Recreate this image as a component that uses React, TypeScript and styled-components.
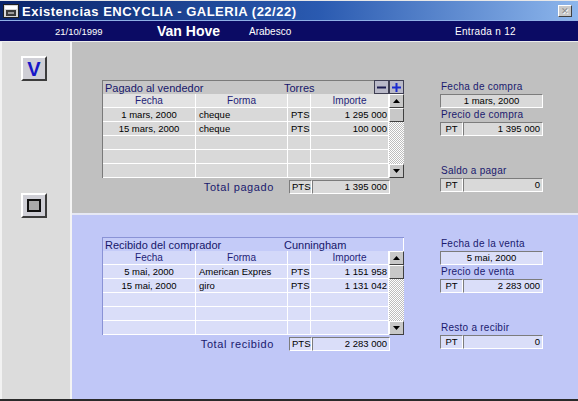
import React from 'react';
import styled, { createGlobalStyle, ThemeProvider } from 'styled-components';

type Palette = {
  panel: string;
  row: string;
  head: string;
  title: string;
  frame: string;
};

const greyTone: Palette = {
  panel: '#c0c0c0',
  row: '#d9d9d9',
  head: '#e3e3e3',
  title: '#c6c6c6',
  frame: '#7a7a7a',
};

const blueTone: Palette = {
  panel: '#c0c7f7',
  row: '#dadef9',
  head: '#d3d8f9',
  title: '#c4cbf8',
  frame: '#8a93d6',
};

type Row = [string, string, string, string];

const pagos: Row[] = [
  ['1 mars, 2000', 'cheque', 'PTS', '1 295 000'],
  ['15 mars, 2000', 'cheque', 'PTS', '100 000'],
];

const cobros: Row[] = [
  ['5 mai, 2000', 'American Expres', 'PTS', '1 151 958'],
  ['15 mai, 2000', 'giro', 'PTS', '1 131 042'],
];

const GlobalStyle = createGlobalStyle`
  html, body {
    margin: 0;
    padding: 0;
    background: #c0c0c0;
  }
  body {
    font-family: "Liberation Sans", Arial, sans-serif;
  }
`;

const Window = styled.div`
  width: 578px;
  height: 401px;
  box-sizing: border-box;
  display: flex;
  flex-direction: column;
  border-top: 1px solid #e8e8e8;
  border-bottom: 2px solid #2a2a2a;
  background: #c0c0c0;
  overflow: hidden;
`;

const TitleBar = styled.div`
  height: 19px;
  display: flex;
  align-items: center;
  gap: 3px;
  padding: 1px 6px 0 3px;
  box-sizing: border-box;
  background: linear-gradient(90deg, #0a246a 0%, #2a5ab0 55%, #8db6ec 100%);
`;

const TitleText = styled.span`
  flex: 1;
  color: #ffffff;
  font-weight: bold;
  font-size: 13px;
  letter-spacing: 0.5px;
  white-space: nowrap;
`;

const CloseButton = styled.span`
  width: 14px;
  height: 12px;
  box-sizing: border-box;
  display: flex;
  align-items: center;
  justify-content: center;
  background: #c8c8c8;
  border: 1px solid;
  border-color: #ffffff #404040 #404040 #ffffff;
  color: #8a8a8a;
  font-size: 9px;
  line-height: 1;
  text-shadow: 1px 1px 0 #ffffff;
`;

const Header = styled.div`
  height: 21px;
  box-sizing: border-box;
  display: grid;
  grid-template-columns: 102px 92px 206px 1fr;
  align-items: center;
  padding-left: 55px;
  border-top: 1px solid #8fb0e6;
  background: #0b0b64;
  color: #ffffff;
`;

const HeaderText = styled.span<{ $size: number; $bold?: boolean; $spacing?: number }>`
  font-size: ${(p) => p.$size}px;
  font-weight: ${(p) => (p.$bold ? 'bold' : 'normal')};
  letter-spacing: ${(p) => p.$spacing ?? 0}px;
  white-space: nowrap;
`;

const Body = styled.div`
  flex: 1;
  display: flex;
  border-top: 1px solid #ececec;
`;

const Sidebar = styled.div`
  width: 72px;
  box-sizing: border-box;
  display: flex;
  flex-direction: column;
  gap: 112px;
  padding: 14px 0 0 21px;
  background: #dcdcdc;
  box-shadow: inset 2px 0 0 #f2f2f2, inset -2px 0 0 #f4f4f4;
`;

const SideButton = styled.button`
  width: 26px;
  height: 25px;
  padding: 0;
  display: flex;
  align-items: center;
  justify-content: center;
  background: #cfcfd6;
  border: 2px solid;
  border-color: #ffffff #3c3c3c #3c3c3c #ffffff;
  font-family: "Liberation Sans", Arial, sans-serif;
`;

const VGlyph = styled.span`
  color: #1616c8;
  font-size: 20px;
  font-weight: bold;
  line-height: 1;
`;

const StopGlyph = styled.span`
  width: 14px;
  height: 13px;
  box-sizing: border-box;
  border: 2px solid #111111;
  background: #a9a9a9;
`;

const Main = styled.div`
  flex: 1;
  display: flex;
  flex-direction: column;
`;

const Section = styled.section<{ $top: number; $fill?: boolean }>`
  box-sizing: border-box;
  display: flex;
  align-items: flex-start;
  gap: 36px;
  padding: ${(p) => p.$top}px 0 0 30px;
  height: ${(p) => (p.$fill ? 'auto' : '173px')};
  flex: ${(p) => (p.$fill ? 1 : 'none')};
  background: ${(p) => p.theme.panel};
  border-bottom: ${(p) => (p.$fill ? 'none' : '2px solid #e6e8f4')};
`;

const TableBlock = styled.div`
  width: 302px;
  display: flex;
  flex-direction: column;
`;

const Frame = styled.div`
  box-sizing: border-box;
  border-top: 1px solid ${(p) => p.theme.frame};
  border-left: 1px solid ${(p) => p.theme.frame};
`;

const TitleRow = styled.div<{ $boxed?: boolean }>`
  height: 13px;
  display: grid;
  grid-template-columns: 179px 1fr auto;
  align-items: center;
  padding-left: 2px;
  background: ${(p) => p.theme.title};
  border-right: ${(p) => (p.$boxed ? '1px solid #ffffff' : 'none')};
  color: #16166a;
  font-size: 11px;
  white-space: nowrap;
`;

const PlusMinus = styled.div`
  display: flex;
  align-self: start;
  margin-top: -1px;
`;

const SmallButton = styled.span`
  width: 15px;
  height: 14px;
  box-sizing: border-box;
  display: flex;
  align-items: center;
  justify-content: center;
  background: #b9b9c8;
  border: 1px solid #3e3e52;
`;

const TableBody = styled.div`
  display: flex;
`;

const Grid = styled.div`
  display: grid;
  grid-template-columns: 93px 92px 23px 78px;
  grid-auto-rows: 14px;
`;

const HeadCell = styled.div`
  box-sizing: border-box;
  background: ${(p) => p.theme.head};
  border-right: 1px solid #ffffff;
  border-bottom: 1px solid #ffffff;
  color: #1e1e78;
  font-size: 10px;
  line-height: 13px;
  text-align: center;
`;

const Cell = styled.div<{ $align: 'left' | 'center' | 'right' }>`
  box-sizing: border-box;
  padding: 0 ${(p) => (p.$align === 'right' ? 1 : 3)}px 0 3px;
  background: ${(p) => p.theme.row};
  border-right: 1px solid #ffffff;
  border-bottom: 1px solid #ffffff;
  color: #000000;
  font-size: 9.5px;
  line-height: 13px;
  text-align: ${(p) => p.$align};
  white-space: nowrap;
  overflow: hidden;
`;

const Scroll = styled.div`
  width: 15px;
  display: flex;
  flex-direction: column;
`;

const ScrollButton = styled.span`
  height: 14px;
  box-sizing: border-box;
  display: flex;
  align-items: center;
  justify-content: center;
  background: #c8c8c8;
  border: 1px solid;
  border-color: #ffffff #404040 #404040 #ffffff;
`;

const Track = styled.span`
  flex: 1;
  background: repeating-conic-gradient(#bdbdbd 0 25%, #ffffff 0 50%) 0 0 / 2px 2px;
`;

const TotalRow = styled.div`
  display: grid;
  grid-template-columns: 187px 23px 78px;
  height: 14px;
  margin-top: 2px;
`;

const TotalLabel = styled.span`
  padding-right: 15px;
  color: #1a1a6e;
  font-size: 11px;
  letter-spacing: 0.6px;
  line-height: 14px;
  text-align: right;
  white-space: nowrap;
`;

const Box = styled.span<{ $align: 'left' | 'center' | 'right' }>`
  box-sizing: border-box;
  height: 14px;
  padding: 0 2px;
  background: ${(p) => p.theme.row};
  border: 1px solid;
  border-color: #7c7c7c #ffffff #ffffff #7c7c7c;
  color: #000000;
  font-size: 9.5px;
  line-height: 12px;
  text-align: ${(p) => p.$align};
  white-space: nowrap;
`;

const FieldColumn = styled.div`
  width: 103px;
  display: flex;
  flex-direction: column;
`;

const FieldLabel = styled.span<{ $gap?: number }>`
  height: 14px;
  margin-top: ${(p) => p.$gap ?? 0}px;
  padding-left: 1px;
  color: #1a1a6e;
  font-size: 10px;
  letter-spacing: 0.25px;
  line-height: 13px;
  white-space: nowrap;
`;

const MoneyField = styled.div`
  display: grid;
  grid-template-columns: 23px 1fr;
`;

const TitleIcon = () => (
  <svg width="16" height="14" viewBox="0 0 16 14">
    <rect x="0.5" y="0.5" width="15" height="13" fill="#d8d8d8" stroke="#202020" />
    <rect x="2" y="2" width="12" height="3" fill="#ffffff" />
    <rect x="3" y="6" width="10" height="6" fill="#3a3a3a" />
    <rect x="5" y="8" width="6" height="2" fill="#9a9a9a" />
  </svg>
);

const Arrow = ({ up }: { up?: boolean }) => (
  <svg width="7" height="4" viewBox="0 0 7 4">
    <polygon points={up ? '3.5,0 7,4 0,4' : '0,0 7,0 3.5,4'} fill="#000000" />
  </svg>
);

const MinusIcon = () => (
  <svg width="11" height="11" viewBox="0 0 11 11">
    <rect x="1" y="4.5" width="9" height="2" fill="#1c1c50" />
  </svg>
);

const PlusIcon = () => (
  <svg width="11" height="11" viewBox="0 0 11 11">
    <rect x="1" y="4.5" width="9" height="2" fill="#1a2ad0" />
    <rect x="4.5" y="1" width="2" height="9" fill="#1a2ad0" />
  </svg>
);

interface LedgerProps {
  title: string;
  party: string;
  rows: Row[];
  totalLabel: string;
  total: string;
  editable?: boolean;
}

const Ledger = ({ title, party, rows, totalLabel, total, editable }: LedgerProps) => {
  const filled = [...rows];
  while (filled.length < 5) filled.push(['', '', '', '']);
  return (
    <TableBlock>
      <Frame>
        <TitleRow $boxed={!editable}>
          <span>{title}</span>
          <span>{party}</span>
          {editable ? (
            <PlusMinus>
              <SmallButton>
                <MinusIcon />
              </SmallButton>
              <SmallButton>
                <PlusIcon />
              </SmallButton>
            </PlusMinus>
          ) : (
            <span />
          )}
        </TitleRow>
        <TableBody>
          <Grid>
            <HeadCell>Fecha</HeadCell>
            <HeadCell>Forma</HeadCell>
            <HeadCell />
            <HeadCell>Importe</HeadCell>
            {filled.map((r, i) => (
              <React.Fragment key={i}>
                <Cell $align="center">{r[0]}</Cell>
                <Cell $align="left">{r[1]}</Cell>
                <Cell $align="center">{r[2]}</Cell>
                <Cell $align="right">{r[3]}</Cell>
              </React.Fragment>
            ))}
          </Grid>
          <Scroll>
            <ScrollButton>
              <Arrow up />
            </ScrollButton>
            <ScrollButton />
            <Track />
            <ScrollButton>
              <Arrow />
            </ScrollButton>
          </Scroll>
        </TableBody>
      </Frame>
      <TotalRow>
        <TotalLabel>{totalLabel}</TotalLabel>
        <Box $align="center">PTS</Box>
        <Box $align="right">{total}</Box>
      </TotalRow>
    </TableBlock>
  );
};

interface FieldsProps {
  dateLabel: string;
  date: string;
  priceLabel: string;
  price: string;
  restLabel: string;
  rest: string;
}

const Fields = ({ dateLabel, date, priceLabel, price, restLabel, rest }: FieldsProps) => (
  <FieldColumn>
    <FieldLabel>{dateLabel}</FieldLabel>
    <Box $align="center">{date}</Box>
    <FieldLabel>{priceLabel}</FieldLabel>
    <MoneyField>
      <Box $align="center">PT</Box>
      <Box $align="right">{price}</Box>
    </MoneyField>
    <FieldLabel $gap={28}>{restLabel}</FieldLabel>
    <MoneyField>
      <Box $align="center">PT</Box>
      <Box $align="right">{rest}</Box>
    </MoneyField>
  </FieldColumn>
);

export default function App() {
  return (
    <>
      <GlobalStyle />
      <Window>
        <TitleBar>
          <TitleIcon />
          <TitleText>Existencias ENCYCLIA - GALERIA (22/22)</TitleText>
          <CloseButton>✕</CloseButton>
        </TitleBar>
        <Header>
          <HeaderText $size={9.5}>21/10/1999</HeaderText>
          <HeaderText $size={14} $bold>
            Van Hove
          </HeaderText>
          <HeaderText $size={10}>Arabesco</HeaderText>
          <HeaderText $size={10} $spacing={0.3}>
            Entrada n 12
          </HeaderText>
        </Header>
        <Body>
          <Sidebar>
            <SideButton>
              <VGlyph>V</VGlyph>
            </SideButton>
            <SideButton>
              <StopGlyph />
            </SideButton>
          </Sidebar>
          <Main>
            <ThemeProvider theme={greyTone}>
              <Section $top={38}>
                <Ledger
                  title="Pagado al vendedor"
                  party="Torres"
                  rows={pagos}
                  totalLabel="Total pagado"
                  total="1 395 000"
                  editable
                />
                <Fields
                  dateLabel="Fecha de compra"
                  date="1 mars, 2000"
                  priceLabel="Precio de compra"
                  price="1 395 000"
                  restLabel="Saldo a pagar"
                  rest="0"
                />
              </Section>
            </ThemeProvider>
            <ThemeProvider theme={blueTone}>
              <Section $top={22} $fill>
                <Ledger
                  title="Recibido del comprador"
                  party="Cunningham"
                  rows={cobros}
                  totalLabel="Total recibido"
                  total="2 283 000"
                />
                <Fields
                  dateLabel="Fecha de la venta"
                  date="5 mai, 2000"
                  priceLabel="Precio de venta"
                  price="2 283 000"
                  restLabel="Resto a recibir"
                  rest="0"
                />
              </Section>
            </ThemeProvider>
          </Main>
        </Body>
      </Window>
    </>
  );
}
